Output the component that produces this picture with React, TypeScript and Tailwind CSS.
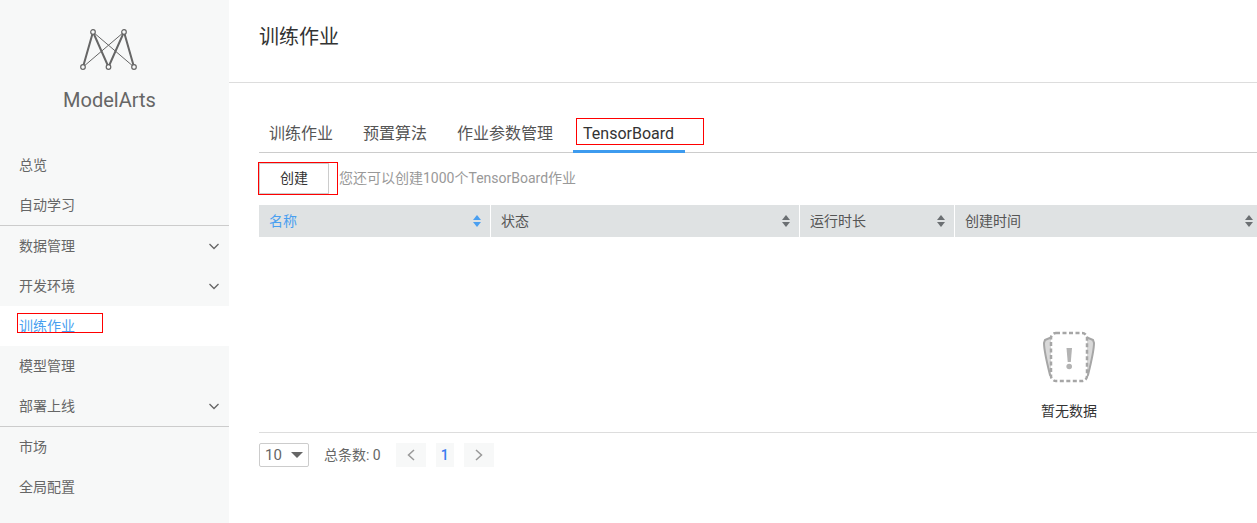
import React from 'react';

const FONT = "font-['Roboto','Noto_Sans_CJK_SC',sans-serif]";

const Chevron: React.FC = () => (
  <svg width="10" height="7" viewBox="0 0 10 7" fill="none" stroke="#666" strokeWidth="1.3">
    <path d="M0.500 1 L5 5.500 L9.500 1" />
  </svg>
);

const Logo: React.FC = () => (
  <svg className="mr-[3px]" width="60" height="44" viewBox="0 0 60 44" fill="none" stroke="#666">
    <g strokeWidth="1">
      <path d="M5 39 L46 4" />
      <path d="M15 4 L56 39" />
    </g>
    <g strokeWidth="2">
      <path d="M5 39 L15 4 L30.500 39 L46 4 L56 39" />
    </g>
    <g fill="#f7f8f8" strokeWidth="1.200">
      <circle cx="15" cy="4" r="2.300" />
      <circle cx="46" cy="4" r="2.300" />
      <circle cx="5" cy="39" r="2.300" />
      <circle cx="30.500" cy="39" r="2.300" />
      <circle cx="56" cy="39" r="2.300" />
    </g>
  </svg>
);

const SortIcon: React.FC<{ active?: boolean }> = ({ active }) => (
  <svg width="10" height="14" viewBox="0 0 10 14" fill={active ? '#4a9ff0' : '#6b6f72'}>
    <path d="M5 1 L9 6 L1 6 Z" />
    <path d="M5 13 L9 8 L1 8 Z" />
  </svg>
);

const EmptyIcon: React.FC = () => (
  <svg width="54" height="52" viewBox="0 0 54 52" fill="none">
    <path d="M3 9 L10 6 L10 46 L8 44 C6 36 2 20 2 12 Z" fill="#d9d9d9" stroke="#a6a6a6" strokeWidth="2" />
    <path d="M51 9 L44 6 L44 46 L46 44 C48 36 52 20 52 12 Z" fill="#d9d9d9" stroke="#a6a6a6" strokeWidth="2" />
    <rect x="9" y="2" width="36" height="48" rx="5" fill="#fff" stroke="#a6a6a6" strokeWidth="2.500" strokeDasharray="4 2.500" />
    <path d="M24.500 17 L30 17 L28.800 31 L25.700 31 Z" fill="#b3b3b3" />
    <circle cx="27.200" cy="35.500" r="2.800" fill="#b3b3b3" />
  </svg>
);

const NavItem: React.FC<{ label: string; chevron?: boolean; active?: boolean; border?: boolean }> = ({
  label,
  chevron,
  active,
  border,
}) => (
  <div
    className={`flex items-center justify-between pl-[19px] pr-[10px] text-[14px] ${
      active ? 'bg-white text-[#4a9ff0] underline' : 'text-[#666]'
    } ${border ? 'h-[41px] border-t border-[#ccc]' : 'h-10'}`}
  >
    <span>{label}</span>
    {chevron && <Chevron />}
  </div>
);

const columns = [
  { label: '名称', width: 'w-[231px] pr-[8px]', active: true },
  { label: '状态', width: 'w-[308px] pr-[8px]' },
  { label: '运行时长', width: 'w-[154px] pr-[8px]' },
  { label: '创建时间', width: 'flex-1 pr-[3px]' },
];

export default function App() {
  return (
    <div className={`${FONT} flex w-[1257px] h-[523px] overflow-hidden bg-white`}>
      <aside className="w-[229px] shrink-0 bg-[#f7f8f8] flex flex-col">
        <div className="flex flex-col items-center pt-[28px] pr-[10px]">
          <Logo />
          <div className="mt-[14px] text-[20px] leading-[28px] text-[#666]">ModelArts</div>
        </div>
        <nav className="mt-[31px]">
          <NavItem label="总览" />
          <NavItem label="自动学习" />
          <NavItem label="数据管理" chevron border />
          <NavItem label="开发环境" chevron />
          <div className="relative">
            <NavItem label="训练作业" active />
            <div className="absolute left-[17px] top-[7px] w-[86px] h-[20px] border border-[#f00]" />
          </div>
          <NavItem label="模型管理" />
          <NavItem label="部署上线" chevron />
          <NavItem label="市场" border />
          <NavItem label="全局配置" />
        </nav>
      </aside>

      <main className="flex-1 min-w-0">
        <header className="h-[83px] border-b border-[#ddd] pl-[30px] pt-[22px] text-[20px] leading-[30px] text-[#333]">
          训练作业
        </header>

        <div className="pl-[30px] pt-[33px]">
          <div className="relative flex h-[37px] border-b border-[#ccc] text-[16px] text-[#555]">
            <div className="px-[10px] pt-[6px] mr-[10px]">训练作业</div>
            <div className="px-[10px] pt-[6px] mr-[10px]">预置算法</div>
            <div className="px-[10px] pt-[6px] mr-[10px]">作业参数管理</div>
            <div className="w-[112px] h-[37px] border-b-[3px] border-[#3d9bef] pl-[10px] pt-[6px] text-[#333]">
              TensorBoard
            </div>
            <div className="absolute left-[317px] top-[2px] w-[128px] h-[27px] border border-[#f00]" />
          </div>

          <div className="flex items-center h-[31px] mt-[10px]">
            <div className="relative w-[70px] h-[31px] mr-[10px] border border-[#ccc] flex items-center justify-center text-[14px] text-[#333]">
              创建
              <div className="absolute left-[-2px] top-[-2px] w-[80px] h-[33px] border border-[#f00]" />
            </div>
            <span className="text-[14px] text-[#999]">您还可以创建1000个TensorBoard作业</span>
          </div>

          <div className="flex h-[32px] mt-[11px] gap-px text-[14px]">
            {columns.map((c) => (
              <div
                key={c.label}
                className={`${c.width} bg-[#dfe2e3] flex items-center justify-between pl-[10px] ${
                  c.active ? 'text-[#4a9ff0]' : 'text-[#555]'
                }`}
              >
                <span>{c.label}</span>
                <SortIcon active={c.active} />
              </div>
            ))}
          </div>

          <div className="h-[196px] border-b border-[#ddd] flex flex-col items-center pl-[622px] pt-[94px]">
            <EmptyIcon />
            <div className="mt-[18px] text-[14px] leading-[20px] text-[#333]">暂无数据</div>
          </div>

          <div className="flex items-center h-[24px] mt-[10px] text-[14px] text-[#666]">
            <div className="w-[50px] h-[24px] border border-[#ccc] rounded-[2px] flex items-center justify-between pl-[5px] pr-[5px] text-[15px]">
              <span>10</span>
              <svg width="12" height="6" viewBox="0 0 12 6" fill="#666">
                <path d="M0 0 L12 0 L6 6 Z" />
              </svg>
            </div>
            <span className="ml-[15px]">总条数: 0</span>
            <div className="ml-[15px] w-[30px] h-[24px] bg-[#f7f8f8] flex items-center justify-center">
              <svg width="8" height="12" viewBox="0 0 8 12" fill="none" stroke="#999" strokeWidth="1.500">
                <path d="M7 1 L1.500 6 L7 11" />
              </svg>
            </div>
            <div className="ml-[10px] w-[18px] h-[24px] bg-[#f7f8f8] flex items-center justify-center text-[14px] font-medium text-[#3a7cf0]">
              1
            </div>
            <div className="ml-[10px] w-[30px] h-[24px] bg-[#f7f8f8] flex items-center justify-center">
              <svg width="8" height="12" viewBox="0 0 8 12" fill="none" stroke="#999" strokeWidth="1.500">
                <path d="M1 1 L6.500 6 L1 11" />
              </svg>
            </div>
          </div>
        </div>
      </main>
    </div>
  );
}
